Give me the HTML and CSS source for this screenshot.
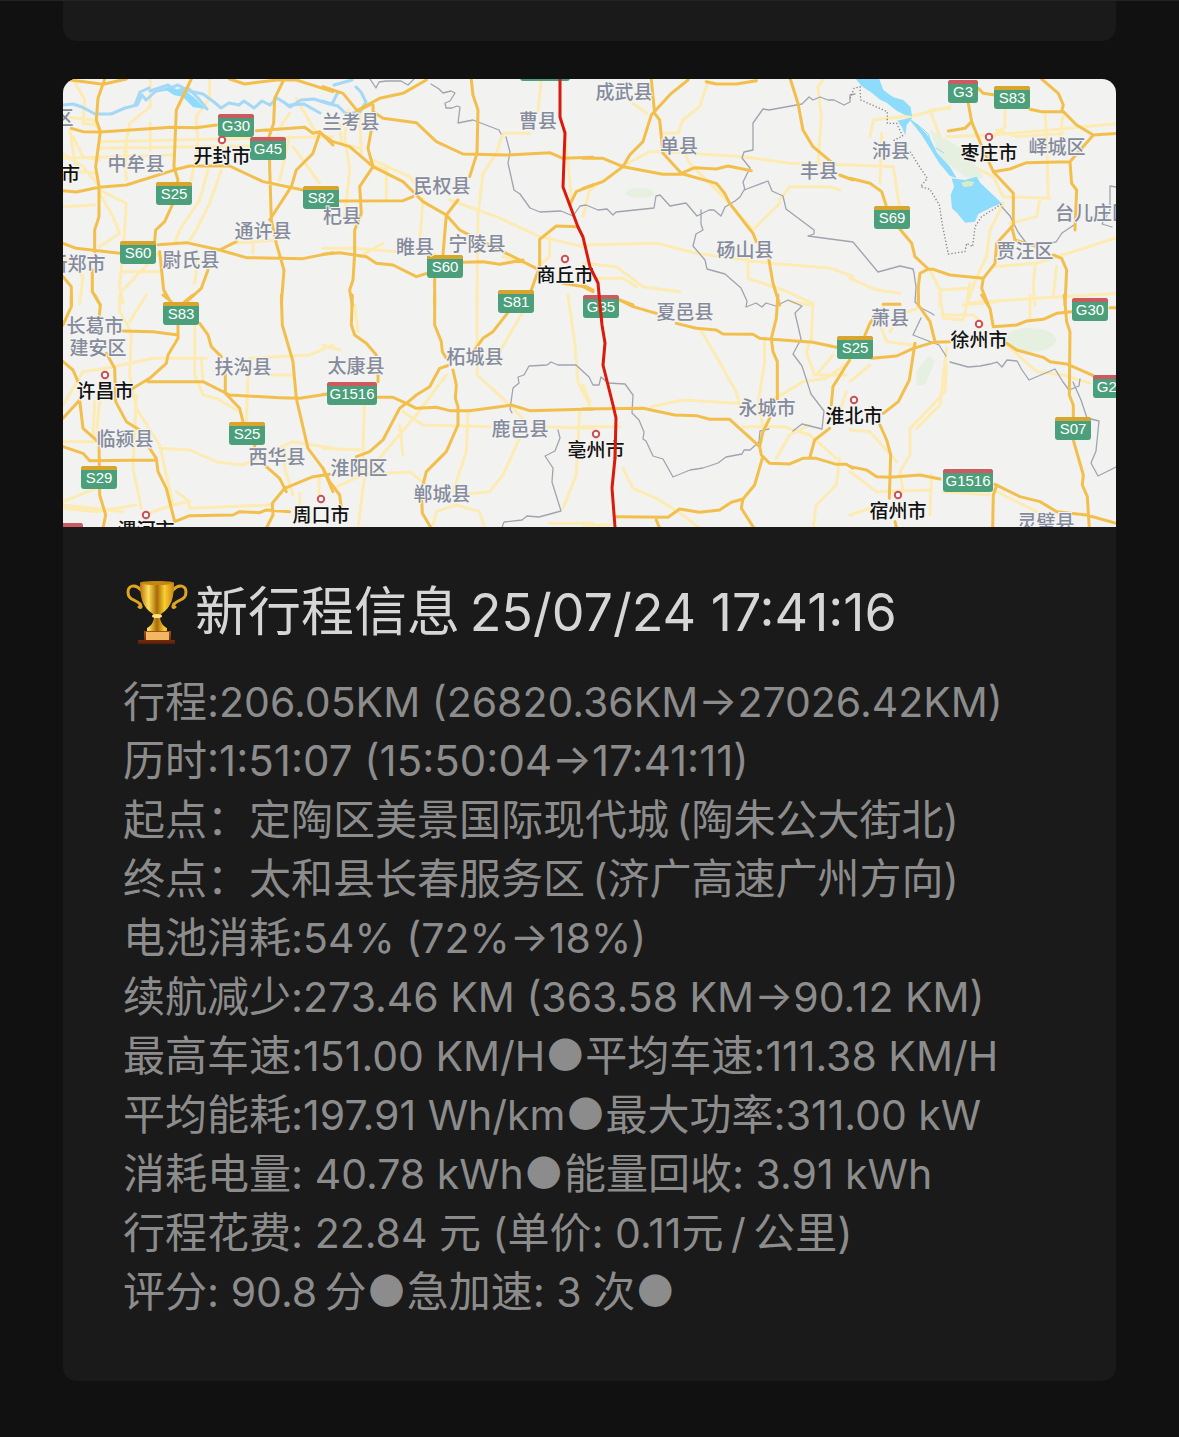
FILE: index.html
```html
<!DOCTYPE html>
<html lang="zh-CN">
<head>
  <meta charset="UTF-8">
  <meta name="viewport" content="width=device-width, initial-scale=1.0">
  <title>新行程信息</title>
  <link rel="stylesheet" href="styles.css">
</head>
<body>

<main class="feed">
  <div class="card card-prev"></div>

  <article class="card">
    <svg class="map" viewBox="63 79 1053 448" role="img" aria-label="行程地图">
      <defs>
        <g id="sign-g"><rect class="sign" x="-18" y="-11" width="36" height="23" rx="3"/><path class="sign-red" d="M-18 -7v-1a3 3 0 0 1 3-3h30a3 3 0 0 1 3 3v1z"/></g>
        <g id="sign-s"><rect class="sign" x="-18" y="-11" width="36" height="23" rx="3"/><path class="sign-gold" d="M-18 -7v-1a3 3 0 0 1 3-3h30a3 3 0 0 1 3 3v1z"/></g>
        <g id="sign-short"><rect class="sign" x="-15" y="-11" width="30" height="23" rx="3"/><path class="sign-red" d="M-15 -7v-1a3 3 0 0 1 3-3h24a3 3 0 0 1 3 3v1z"/></g>
        <g id="sign-wide"><rect class="sign" x="-25" y="-11" width="50" height="23" rx="3"/><path class="sign-red" d="M-25 -7v-1a3 3 0 0 1 3-3h44a3 3 0 0 1 3 3v1z"/></g>
        <circle id="dot" class="dot" r="3.2"/>
      </defs>
      <rect class="land" x="63" y="79" width="1053" height="448"/>

      <!-- minor roads -->
      <g class="minor">
        <g transform="translate(63 70) scale(.3333)">
          <path d="M30 27L65 90 60 160 100 165M0 140L90 150 108 180M20 180L40 300 20 340M262 30L262 110 200 160 185 240 190 330M440 27L440 85 400 140 405 230 385 330M110 215L810 200M110 235L560 228M0 265L330 255M190 218L188 290M262 160V240M0 410L95 405M110 360L190 400 185 480 170 650 180 700M435 300L410 390 350 480 335 520M475 300L440 400 400 480 375 520M680 130L645 180M690 230L770 340M700 85L760 190M680 200L650 330M0 300L100 310M180 605L290 605M290 545L180 660M405 560L395 640M520 520L640 510M570 520V550M110 370L150 440 170 490 110 530M0 250L60 290 110 350M30 200L60 260 110 270M0 560L60 620 50 700"/>
        </g>
        <g transform="translate(323 70) scale(.3333)">
          <path d="M655 27L645 125M620 190H540L520 250 480 310 465 430 462 705M75 120L65 200 80 300 65 440M110 120L115 250M150 270L260 320 300 370M190 290V385M150 285L190 300M300 385L290 520M380 390L520 440 650 500 780 530M0 535L100 535 220 545 340 555M110 560L180 520M725 180L745 380M680 500V560L645 590M50 160L55 220 110 235M540 560L600 580"/>
        </g>
        <g transform="translate(583 70) scale(.3333)">
          <path d="M375 35L350 110 300 150 285 190 240 190M150 100L190 130M125 285L200 245 240 245 480 260 620 280 810 285M295 230L320 280 420 380 510 480M590 390L620 350 740 350 770 360M510 480L590 400M720 30L705 50 715 140 705 280M0 525L220 520 340 550 560 580 745 595 810 620M0 580L100 590 180 650 290 665M495 560V625L600 660 690 700M0 440L20 360 120 290M40 625H120L160 650"/>
        </g>
        <g transform="translate(850 70) scale(.3333)">
          <path d="M60 200L70 150 200 135 300 110M300 115L240 120 270 200 330 270 430 320 460 380 600 385M95 190L90 340M0 285L130 290 150 420M290 200L420 195 600 180 810 160M465 120V170L430 200M585 125L590 200 595 385M640 130L630 200M570 385L560 440 480 460M460 400L420 480 410 560 380 620 350 705M430 590L560 580 810 500M240 600L270 660 350 655M555 590L550 650 555 705M620 590L610 680M0 625L80 660 150 670M270 660V705M350 700L480 690 810 670M360 640L350 700M440 180L500 200 640 190"/>
        </g>
        <g transform="translate(63 295) scale(.3333)">
          <path d="M170 0V50L205 110 200 240 220 340 290 450 330 630M395 90V240L420 300 460 310 520 345M0 330L60 230 130 220 270 190 430 190M415 190L420 260M560 190L740 180 810 150M555 240L550 380M620 240H690M110 310L100 430M220 300L210 520 235 640M290 460L380 465 460 500 540 510 690 440 810 460M0 440H100M0 620L100 580M0 630L180 650M240 660L330 630 375 620 380 640 620 630M340 590L380 620M690 600L665 520V460M710 595L710 650M768 550V600M95 320L90 420M250 0L200 80M0 640L100 650 220 630"/>
        </g>
        <g transform="translate(323 295) scale(.3333)">
          <path d="M95 30L105 110M462 0V240L540 310 600 370M600 50L530 170M0 150L50 165M125 310L120 460 125 540 105 700M240 350L300 390 500 395M230 390L240 480M435 350L430 470 390 590M100 540L160 500 280 360 370 240M0 460L110 465M30 580L120 540 260 530 310 570M590 430L540 540 500 590 400 600M330 690L340 650 400 630 470 650 485 700M735 0L755 140 765 260 800 330M660 395L810 400M770 350L760 540 720 640M680 685H810"/>
        </g>
        <g transform="translate(583 295) scale(.3333)">
          <path d="M350 100L380 150 460 290 470 330M205 335L300 315 460 325M690 30L685 130 670 170 695 240M545 130V200L525 330 540 390M480 395H600L680 420 760 490M580 490L620 420 680 390M560 320L660 260 730 250 800 200M770 490L760 570 700 630 690 700M120 520L150 580 220 610 300 660 350 700M620 20L690 30M0 270L20 320M110 395H0M0 690H80M750 180L700 240 790 240M790 290L770 350"/>
        </g>
        <g transform="translate(850 295) scale(.3333)">
          <path d="M100 30L90 90 110 140 190 150M200 40L150 60 120 110M270 0L280 70 340 75 350 30M340 30L440 20M540 0V70M470 150L560 230 640 240 720 265M290 210L285 290 210 370 180 400 180 480 150 530 160 590M280 60L370 60 400 90M0 260L60 210M0 405L60 410 140 500M0 530L80 590 240 585M245 540L240 660M440 590L560 650M0 660L60 640M280 590L420 600M290 160L270 330 200 400"/>
        </g>
      </g>

      <!-- parks and water -->
      <g class="park">
        <ellipse cx="640" cy="193" rx="14" ry="5"/>
        <ellipse cx="1030" cy="340" rx="26" ry="12"/>
        <path d="M917 370l12-14 6 6-10 22-9 2z"/>
        <path d="M930 130l34 20 20 28-14 2-30-22z"/>
      </g>
      <g class="river">
        <path d="M63 105l10-1 9 3 13 7h16l14-6 12-3 5-10 4 5 10-9 12-2 10-4 11 6 14 3 11 8 7 6 8-5 10 2 5-4 10 7 8-7 8 4 7-7 8 5 5 4 11-7 13-1 12 4 12 3 8 8 14-2 6-10-5-10-5-5"/>
        <path d="M135 105l5-13 9-4M150 91l18-6 8 6 12-3 10 10 9 11M290 105l14-1 16 9M322 101l10 3 6-12M334 85l18-5"/>
      </g>
      <path class="water" d="M166 87l10 3 9 0 12 10 8 9-12-2-10-10-9-2-8-5z"/>
      <g class="water" transform="translate(850 70) scale(.3333)">
        <path d="M18 27H88L100 60 130 82 160 90 182 112 186 138 165 135 140 122 110 98 92 90 62 66 34 48z"/>
        <path d="M142 152L188 142 170 165 166 196 155 170z"/>
        <path d="M305 325L345 330 380 320 392 340 435 380 455 400 425 412 385 432 375 455 345 458 322 430 306 415 302 375 312 350z"/>
        <path d="M175 145L205 165 240 205 262 250 300 290 320 325 300 318 268 280 240 235 215 195z"/>
      </g>
      <path class="river-thin" d="M911 120l12 9 6 6 1 10M936 148l8 5"/>
      <path class="islet" d="M961 183l6-2 7 1-2 4-8 1z"/>

      <!-- province boundaries -->
      <g class="border">
        <path d="M370 79l6 9 3-6 7-1 15 0 7 4 6-6M431 84l8 5 4 4 8-2 4 2-5 8-5 2 1 5 6 0 5-2 3 1-2 16 15-3 26 10 2 4M506 137l4 15-2 11 6 27 6 4 10 14 10 4 21-1 12 5 7-10 6-1 12 5 9-1 6 6 3-3 38-4 2-12 4-1 10 11 16-3 11 13 12-6 5 0 7 6 4-9 10-6 5-4 4-7 24-9 4 10 11 5 3 13 28 21 0 4-6 2 45 6 10 12 15 18 22-6 13 3 1 4 2 14-1 15 6 6 10 5 3 2M921 318l-8 17 26 10 7 11"/>
        <path d="M745 190l-2-8 7-14-8-10 2-6 9-2v-27l10-14 6 1 33-6 7-7 4 3 7-3 8 3 6 0 10 5 6-3 0-7 5-1"/>
        <path d="M701 210v14l2 6-7 4-3 12 12 14 2 9 18 5 16 14 6 13-1 6 10-4 6 4 4-4 10 3 12-6 14 6-7 7 6 26-8 15 9 12 9 28 13 17-2 18-20-5-9 7"/>
        <path d="M769 429l-9 2-1 11-9 8-6 0-2 4-16 3-8 6-15 5-13 2-17 7-10-18-10-3-7-15-3-2 1-7-5-12-7-7 1-18-8-11-17-1-7-6-2 8-6 0-4-8-13-12-18 0-7-3-4 3-18 1-5 9-6 2 1 6-6 5-3 21 2 4M558 430l2 8-5 13-10 5 8 12-1 14 9 29-22 6-12-1-5 4-18 2-3 8"/>
        <path d="M950 362l18 5 12-1 10-2 7-2 5 5 5-7 10 1 5 9 7 10 26-11 8 13 6 8 10-4 1-7M1073 382l8 18 6 18 12 3-3 30-5 12 7 13 18-9M1002 207l8 9 8 16 9 12 10 0 9-1 10-1 6-9 12-8 6-8M1116 187l-6-1 0 24-8 14 10 3"/>
      </g>
      <g class="border-dots" transform="translate(850 70) scale(.3333)">
        <path d="M0 85L12 55 30 50 32 90 112 125 112 160 140 160 158 198 130 212M180 245L215 300 232 325 212 350 240 358 268 405 278 470 295 552 345 545 350 520 368 530 375 470 395 440 455 402"/>
      </g>

      <!-- main roads -->
      <g class="road">
        <g transform="translate(63 70) scale(.3333)">
          <path d="M0 27L120 43 190 27M125 27L105 85 100 150 112 185 98 290 108 350 108 440 95 480 95 545M88 600V665L112 705M25 175L60 185 112 186 325 172 400 173 460 165M580 182L725 172 750 190 770 185 810 225M385 27L340 120 333 290 345 330 330 400 305 455 278 480 275 515M0 362L40 366 108 352 190 345 340 298 380 288 500 288 600 335 720 360M662 30L635 85 632 160 618 200 620 290 625 450 640 520 663 600 655 705M770 190L750 250 700 300 685 350 620 450M520 515L470 540M0 520L40 535 170 550M285 524L370 518 470 540 550 563 720 566 810 548M290 545L302 660 325 700M435 600L415 655 365 700M0 620L25 650V705M500 27L545 42 640 30 700 30 810 65"/>
        </g>
        <g transform="translate(323 70) scale(.3333)">
          <path d="M0 50L60 70 105 125M105 120L170 85 240 70 310 30M150 105L150 125 180 145 280 158 340 215 420 252 550 255 680 248 720 265 810 262M445 30L450 75 465 120 462 250 440 320M405 390L370 435 360 555M0 195L30 215 80 230 150 290 240 335 300 395 370 435 410 480 470 510 540 545 640 595M45 393L240 392 270 380M145 180L135 235 150 290 110 350 115 430 95 480 95 550 90 630 80 660 88 705M0 553L50 548 130 560 160 580 210 585 280 620 312 610M420 577L480 575 530 583 600 570M335 625V705M765 470L700 468 650 508V590L625 660M740 405L760 365 810 345M720 640L780 650 810 665M100 125L140 105"/>
        </g>
        <g transform="translate(583 70) scale(.3333)">
          <path d="M0 265L60 265 120 290 240 313 300 312 400 340 425 370 440 400 510 490 520 515M0 355L60 335 120 290 140 255 180 215 205 135 265 70 315 30M205 30L215 130 230 150 240 250 295 310 335 293 400 297 435 288 505 302M370 35L400 42 460 42 520 32M622 27L645 100 660 180 690 230 750 280M770 315L810 330M558 570L570 640 590 705M110 690L150 705M0 645L30 660"/>
        </g>
        <g transform="translate(850 70) scale(.3333)">
          <path d="M0 325L60 340 95 365 108 405M150 478L185 520 195 560 235 597 250 598 300 615 400 625 435 580 440 520 490 465 490 370 430 305 400 240 365 155 355 100M365 155L345 175 295 183M385 55L400 70 435 75M540 118L575 125 640 125 680 165 730 195 810 190M575 27L625 70 640 105 635 125M430 305L480 297 530 278 660 275 730 195M660 275L665 340 680 360 675 480M485 470L495 510 560 530M610 555L635 565 650 600 645 705M235 597L210 610 205 650V705M400 625L395 655 415 705"/>
        </g>
        <g transform="translate(63 295) scale(.3333)">
          <path d="M25 0V35L0 90M95 0L112 30 108 70M180 108L270 110 345 120M345 85V130L315 180 310 205 260 250 210 280M255 260L420 260 500 300 650 308 710 310 790 298M130 175L155 220 158 320 190 380 230 405M260 460L280 490 285 530 310 580 335 680 380 662 510 660 530 650 590 653 610 645 680 650M0 200L30 225 45 260M50 315L0 370M50 315L60 400 105 440M108 440L110 600 128 660 120 700M0 455L60 475 80 497 280 495M410 85L435 120 445 155 475 185M487 240V295L530 340 540 380M655 0L658 90 690 200 700 310 735 460 780 520 810 590M610 515L650 550 670 590M610 700L630 660 628 625 665 580 750 545 800 538M575 445V455M300 0L325 20M390 0L365 20"/>
        </g>
        <g transform="translate(323 295) scale(.3333)">
          <path d="M88 0L85 90 95 120 130 145 160 180M165 240V260M335 0L335 90 355 140 358 170 370 190M390 225L400 270 397 310 405 335 405 390 370 470 310 530 295 590 298 655 325 700M553 55L510 110 480 130 455 165M380 210L350 220 320 275 280 300 250 325 230 340 180 435 140 470 100 485M0 298H12M165 307H210L250 325 280 340 340 337 380 347 440 347 530 335 565 330 620 347 810 342M0 520L20 560 50 600 55 640"/>
        </g>
        <g transform="translate(583 295) scale(.3333)">
          <path d="M0 342L180 340 275 360 340 362 380 373 440 373 530 455 535 480 560 505 620 507 660 490 700 490 760 508 790 508 810 520M110 15L150 35 220 55M280 85L340 100 400 105 420 117 510 118 530 130 690 142 760 157M585 0L580 70 565 130 570 170 583 200V320M560 370L540 410 530 455M538 490L515 570 480 612 445 622 410 645 350 652 290 642 255 667 100 665M480 612L475 640 510 695M220 675L230 700M800 195L750 275 745 330M740 400L695 435 680 490"/>
        </g>
        <g transform="translate(850 295) scale(.3333)">
          <path d="M205 0V30L240 80 255 140M395 0L420 40 430 95M65 190L140 183 190 160 250 142 300 140M430 95L500 90 530 78 580 73 620 55 665 50M780 38H810M470 145L500 165 580 187 600 200 650 207 730 242M643 0L650 80 660 110 658 300 670 330V365M670 435L700 540 697 570 712 605 718 700M195 145L178 255 145 320 100 355M90 390L110 435 122 480 118 610M0 515L50 525 80 545 120 547 210 540 270 552M435 568L510 605 570 620 620 650 710 660 810 688M440 570L430 600 428 700M135 680L140 700M150 28H100M45 120L60 85 70 70"/>
        </g>
      </g>

      <!-- road signs -->
      <g class="signs">
        <use href="#sign-wide" x="545" y="69"/>
        <use href="#sign-g" x="65" y="534"/>
        <use href="#sign-g" x="236" y="125"/><text x="236" y="131">G30</text>
        <use href="#sign-g" x="268" y="148"/><text x="268" y="154">G45</text>
        <use href="#sign-s" x="174" y="193"/><text x="174" y="199">S25</text>
        <use href="#sign-s" x="321" y="197"/><text x="321" y="203">S82</text>
        <use href="#sign-s" x="138" y="252"/><text x="138" y="258">S60</text>
        <use href="#sign-s" x="445" y="266"/><text x="445" y="272">S60</text>
        <use href="#sign-s" x="516" y="301"/><text x="516" y="307">S81</text>
        <use href="#sign-g" x="601" y="306"/><text x="601" y="312">G35</text>
        <use href="#sign-s" x="181" y="313"/><text x="181" y="319">S83</text>
        <use href="#sign-wide" x="352" y="393"/><text x="352" y="399">G1516</text>
        <use href="#sign-s" x="247" y="433"/><text x="247" y="439">S25</text>
        <use href="#sign-s" x="99" y="477"/><text x="99" y="483">S29</text>
        <use href="#sign-short" x="963" y="91"/><text x="963" y="97">G3</text>
        <use href="#sign-s" x="1012" y="97"/><text x="1012" y="103">S83</text>
        <use href="#sign-s" x="892" y="217"/><text x="892" y="223">S69</text>
        <use href="#sign-s" x="855" y="347"/><text x="855" y="353">S25</text>
        <use href="#sign-g" x="1090" y="309"/><text x="1090" y="315">G30</text>
        <use href="#sign-g" x="1111" y="386"/><text x="1111" y="392">G25</text>
        <use href="#sign-s" x="1073" y="428"/><text x="1073" y="434">S07</text>
        <use href="#sign-wide" x="968" y="480"/><text x="968" y="486">G1516</text>
      </g>

      <!-- counties and districts -->
      <g class="county">
        <text x="64" y="125">区</text>
        <text x="136" y="171">中牟县</text>
        <text x="351" y="129">兰考县</text>
        <text x="538" y="128">曹县</text>
        <text x="624" y="99">成武县</text>
        <text x="679" y="153">单县</text>
        <text x="819" y="178">丰县</text>
        <text x="891" y="158">沛县</text>
        <text x="1057" y="154">峄城区</text>
        <text x="1093" y="220">台儿庄区</text>
        <text x="1025" y="258">贾汪区</text>
        <text x="442" y="193">民权县</text>
        <text x="342" y="223">杞县</text>
        <text x="263" y="238">通许县</text>
        <text x="415" y="254">睢县</text>
        <text x="477" y="251">宁陵县</text>
        <text x="745" y="257">砀山县</text>
        <text x="77" y="271">新郑市</text>
        <text x="191" y="267">尉氏县</text>
        <text x="685" y="319">夏邑县</text>
        <text x="890" y="325">萧县</text>
        <text x="95" y="333">长葛市</text>
        <text x="98" y="355">建安区</text>
        <text x="243" y="374">扶沟县</text>
        <text x="356" y="373">太康县</text>
        <text x="475" y="364">柘城县</text>
        <text x="767" y="415">永城市</text>
        <text x="125" y="446">临颍县</text>
        <text x="520" y="436">鹿邑县</text>
        <text x="277" y="464">西华县</text>
        <text x="359" y="475">淮阳区</text>
        <text x="442" y="501">郸城县</text>
        <text x="1046" y="529">灵璧县</text>
      </g>

      <!-- cities -->
      <g class="city">
        <use href="#dot" x="222" y="140"/><text x="222" y="163">开封市</text>
        <text x="61" y="181">州市</text>
        <use href="#dot" x="565" y="259"/><text x="565" y="282">商丘市</text>
        <use href="#dot" x="989" y="137"/><text x="989" y="160">枣庄市</text>
        <use href="#dot" x="979" y="324"/><text x="979" y="347">徐州市</text>
        <use href="#dot" x="854" y="400"/><text x="854" y="423">淮北市</text>
        <use href="#dot" x="105" y="375"/><text x="105" y="398">许昌市</text>
        <use href="#dot" x="596" y="434"/><text x="596" y="457">亳州市</text>
        <use href="#dot" x="321" y="499"/><text x="321" y="522">周口市</text>
        <use href="#dot" x="898" y="495"/><text x="898" y="518">宿州市</text>
        <use href="#dot" x="146" y="515"/><text x="146" y="537">漯河市</text>
      </g>

      <!-- driven route -->
      <path class="route" d="M560 79L560 117 565 133 563 187 578 227 583 237 590 267 598 283 600 305 602 325 605 343 603 365 613 405 616 418 615 458 612 488 615 527"/>
    </svg>

    <div class="card-body">
      <h1 class="title">
        <svg class="trophy" viewBox="0 0 64 66" aria-hidden="true">
          <defs>
            <linearGradient id="gold">
              <stop offset="0" stop-color="#b86f08"/>
              <stop offset=".25" stop-color="#ffdf5a"/>
              <stop offset=".5" stop-color="#a86a05"/>
              <stop offset=".72" stop-color="#f8ce32"/>
              <stop offset="1" stop-color="#c98310"/>
            </linearGradient>
            <linearGradient id="wood" x2="0" y2="1">
              <stop offset="0" stop-color="#a4501c"/>
              <stop offset="1" stop-color="#5a1c08"/>
            </linearGradient>
          </defs>
          <path class="trophy-handle" d="M15 10C9 3 2 6 2 12c0 8 7 7 12 12M47 10c6-7 13-4 13 2 0 8-7 7-12 12"/>
          <path class="trophy-handle" d="M14 24c2 3 1 4-1 3M48 24c-2 3-1 4 1 3"/>
          <path fill="url(#gold)" d="M14 3c10-2 24-2 34 0 0 14-2 24-13 31l-1 4c1 5 3 8 7 10v3H21v-3c4-2 6-5 7-10l-1-4C16 27 14 17 14 3z"/>
          <ellipse cx="31" cy="3" rx="17" ry="2" fill="#c58712"/>
          <ellipse cx="31" cy="36" rx="5" ry="2" fill="#ffe47b"/>
          <path fill="url(#wood)" d="M18 51h27v9h4v4H12v-4h6z"/>
          <path fill="#f3b663" d="M20 52h23v8H20z"/>
        </svg>
        <span>新行程信息&thinsp;<span class="title-date">25/07/24 17:41:16</span></span>
      </h1>
      <div class="info">
        <p>行程:<span class="num">206.05KM (26820.36KM→27026.42KM)</span></p>
        <p>历时:1:51:07 (15:50:04→17:41:11)</p>
        <p>起点：定陶区美景国际现代城<span class="num">&thinsp;(</span>陶朱公大街北)</p>
        <p>终点：太和县长春服务区<span class="num">&thinsp;(</span>济广高速广州方向)</p>
        <p>电池消耗:<span class="num">54% (72%→18%)</span></p>
        <p>续航减少:<span class="num">273.46 KM (363.58 KM→90.12 KM)</span></p>
        <p>最高车速:<span class="num">151.00 KM/H</span><span class="bullet">●</span>平均车速:<span class="num">111.38 KM/H</span></p>
        <p>平均能耗:<span class="num">197.91 Wh/km</span><span class="bullet">●</span>最大功率:<span class="num">311.00 kW</span></p>
        <p>消耗电量:<span class="num"> 40.78 kWh</span><span class="bullet">●</span>能量回收:<span class="num"> 3.91 kWh</span></p>
        <p>行程花费:<span class="num"> 22.84 </span>元<span class="num"> (</span>单价:<span class="num"> 0.11</span>元<span class="num">&thinsp;/&thinsp;</span>公里)</p>
        <p>评分:<span class="num"> 90.8&thinsp;</span>分<span class="bullet">●</span>急加速:<span class="num"> 3 </span>次<span class="bullet">●</span></p>
      </div>
    </div>
  </article>
</main>

</body>
</html>
```

FILE: styles.css
```css
* {
  box-sizing: border-box;
}
body {
  margin: 0;
  background-color: #111;
  border-top: 1px solid #242424;
  font-family: Inter, "Noto Sans CJK SC", sans-serif;
}
.feed {
  padding: 0 63px 54px;
}
.card {
  background: #1a1a1a;
  border-radius: 14px;
  overflow: hidden;
}
.card-prev {
  height: 40px;
  margin-bottom: 38px;
  border-radius: 0 0 14px 14px;
}
.map {
  display: block;
  width: 100%;
  height: auto;
}
.land {
  fill: #f2f2f0;
}
.minor,
.road,
.river,
.river-thin,
.border,
.border-dots,
.route {
  fill: none;
  stroke-linejoin: round;
  stroke-linecap: round;
}
.minor {
  stroke: #fdebb4;
  stroke-width: 9px;
}
.road {
  stroke: #f3bf4c;
  stroke-width: 9px;
}
.park {
  fill: #e6f0e0;
}
.river {
  stroke: #a5d8f5;
  stroke-width: 3px;
}
.river-thin {
  stroke: #8edcfb;
  stroke-width: 1px;
}
.water {
  fill: #8edcfb;
}
.islet {
  fill: #d9edc4;
}
.border {
  stroke: #a0a4ae;
  stroke-width: 1.3px;
}
.border-dots {
  stroke: #85878f;
  stroke-width: 4px;
  stroke-dasharray: 4 6;
  stroke-linecap: butt;
}
.route {
  stroke: #d91a0c;
  stroke-width: 3px;
}
.sign {
  fill: #4ba07b;
}
.sign-red {
  fill: #cc5a60;
}
.sign-gold {
  fill: #d9a52c;
}
.signs text {
  fill: #fff;
  font-family: "Liberation Sans", sans-serif;
  font-size: 15px;
  text-anchor: middle;
}
.county text,
.city text {
  font-family: "Noto Sans CJK SC", sans-serif;
  font-size: 19px;
  font-weight: 500;
  text-anchor: middle;
  paint-order: stroke;
  stroke: #f4f4f2;
  stroke-width: 2px;
}
.county text {
  fill: #858b9c;
}
.city text {
  fill: #111;
}
.dot {
  fill: #fff;
  stroke: #cc5055;
  stroke-width: 2px;
}
.card-body {
  padding: 52px 60px 60px;
}
.title {
  display: flex;
  align-items: center;
  margin: 0 0 26px;
  color: #d6d6d6;
  font-size: 53px;
  font-weight: 400;
  line-height: 66px;
}
.title-date {
  font-size: 52px;
}
.trophy {
  flex: none;
  width: 64px;
  height: 66px;
  margin: 0 5px 0 3px;
}
.trophy-handle {
  fill: none;
  stroke: #e0a526;
  stroke-width: 3px;
  stroke-linecap: round;
}
.info {
  color: #8c8c8c;
  font-size: 42px;
  line-height: 59px;
}
.info p {
  margin: 0;
}
.num {
  font-size: 41px;
  line-height: 41px;
}
.bullet {
  margin: 0 2px;
  font-family: "Noto Sans CJK SC", sans-serif;
  font-size: 36px;
  line-height: 36px;
  vertical-align: 2px;
}
```
